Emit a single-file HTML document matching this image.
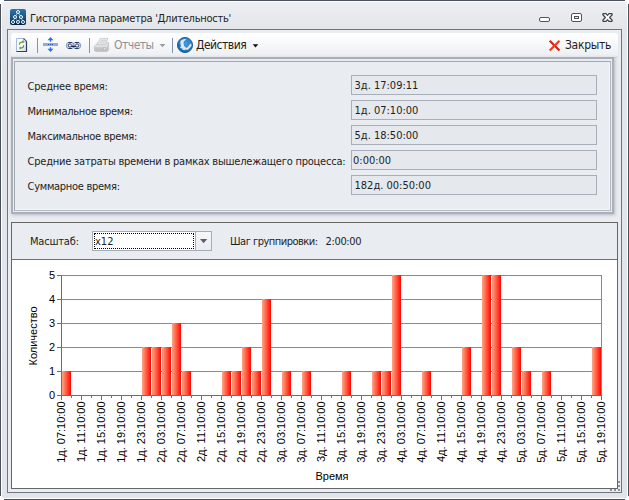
<!DOCTYPE html>
<html lang="ru"><head><meta charset="utf-8"><title>Гистограмма параметра 'Длительность'</title>
<style>
html,body{margin:0;padding:0;width:629px;height:500px;overflow:hidden;background:#fff;}
body{font-family:"DejaVu Sans Condensed","Liberation Sans",sans-serif;font-size:11px;letter-spacing:-0.2px;color:#1e1e1e;position:relative;}
.abs{position:absolute;}
#win{left:1px;top:1px;width:625px;height:496px;border:1px solid #fff;border-radius:2px;background:linear-gradient(#edeff2 0px,#e2e5e9 28px,#e1e4e8 100%);}
.ob{background:#4b515b;}
#inner{left:7px;top:29px;width:613px;height:462px;border:1px solid #6f757e;background:#e9ecf0;}
#title{left:30px;top:12px;letter-spacing:-0.27px;line-height:14px;color:#1e1e1e;white-space:nowrap;}
#tb{left:11px;top:33px;width:607px;height:24px;border-radius:3px;background:linear-gradient(#ffffff,#fcfcfd 25%,#f3f5f7 62%,#eceef2);box-shadow:0 1px 1px rgba(90,100,115,.25);}
.tbt{top:38px;line-height:14px;font-size:12px;letter-spacing:-0.5px;white-space:nowrap;}
.sep{width:1px;height:15px;top:38px;background:#8492ad;}
.lbl{left:27.5px;letter-spacing:-0.28px;white-space:nowrap;line-height:14px;}
.fld{left:351px;width:244px;height:18px;border:1px solid #a9afb9;background:#e5e8ec;line-height:20px;white-space:nowrap;letter-spacing:0;}
.fld span{padding-left:2.5px;}
#grp{left:11px;top:57px;width:599px;height:153px;border:2px solid #a9aeb8;background:#e9ecf0;box-shadow:1px 1px 3px rgba(120,130,145,.45);}
#grp2{left:14px;top:61px;width:595px;height:148px;border:1px solid #a2a7b0;border-right-color:#b3b8c1;border-bottom-color:#b3b8c1;box-shadow:inset -1px -1px 0 #f4f6f8;}
#cp{left:11px;top:222px;width:605px;height:265px;border:1px solid #666;background:#fff;}
#cph{left:12px;top:223px;width:605px;height:36px;background:#e9ecf0;border-bottom:1px solid #6b7077;}
.ax{font-family:"Liberation Sans",sans-serif;font-size:11px;letter-spacing:0;fill:#000;}
</style></head><body>
<div class="abs ob" style="left:4px;top:0;width:621px;height:1px"></div><div class="abs ob" style="left:4px;top:499px;width:621px;height:1px"></div><div class="abs ob" style="left:0;top:4px;width:1px;height:492px"></div><div class="abs ob" style="left:628px;top:4px;width:1px;height:492px"></div>
<div id="win" class="abs"></div>
<div id="inner" class="abs"></div>
<div id="title" class="abs">Гистограмма параметра 'Длительность'</div>
<div id="tb" class="abs"></div>
<div class="abs sep" style="left:37px"></div>
<div class="abs sep" style="left:89px"></div>
<div class="abs sep" style="left:172px"></div>
<div class="abs tbt" style="left:114px;color:#8d9199;">Отчеты</div>
<div class="abs tbt" style="left:196px;">Действия</div>
<div class="abs tbt" style="left:565px;letter-spacing:-0.3px">Закрыть</div>

<!-- title icon -->
<svg class="abs" style="left:10px;top:9px" width="16" height="16" viewBox="0 0 16 16"><defs><linearGradient id="ti" gradientUnits="userSpaceOnUse" x1="0" y1="0" x2="0" y2="16"><stop offset="0" stop-color="#2d74ad"/><stop offset="0.55" stop-color="#175281"/><stop offset="1" stop-color="#04213c"/></linearGradient></defs>
<rect x="0" y="0" width="16" height="16" rx="2" fill="url(#ti)"/>
<g stroke="#c4dcf2" stroke-width="0.7" fill="none"><path d="M8 3 L5 8 L3 13 M8 3 L11 8 L13 13"/><path d="M5.4 8 L7.6 13 M10.6 8 L8.4 13" stroke-opacity="0.55"/></g>
<g stroke="#f2f9ff" stroke-width="1" fill="url(#ti)"><circle cx="8" cy="3" r="1.5"/><circle cx="5" cy="8" r="1.5"/><circle cx="11" cy="8" r="1.5"/><circle cx="3" cy="13" r="1.5"/><circle cx="8" cy="13" r="1.5"/><circle cx="13" cy="13" r="1.5"/></g></svg>
<!-- window buttons -->
<svg class="abs" style="left:536px;top:10px" width="82" height="16" viewBox="536 10 82 16">
<rect x="539.5" y="17.5" width="10" height="4" rx="1.5" fill="#fff" stroke="#4f545c"/>
<rect x="571.5" y="13.5" width="10" height="8" rx="1.5" fill="#fff" stroke="#4f545c"/>
<rect x="574.5" y="16.5" width="4" height="2" fill="#e8ebef" stroke="#4f545c"/>
<path d="M603.4 13.6 L606 13.6 L607.5 15.4 L609 13.6 L611.6 13.6 Q612.6 14.2 612 15 L609.6 17.5 L612 20 Q612.6 20.8 611.6 21.4 L609 21.4 L607.5 19.6 L606 21.4 L603.4 21.4 Q602.4 20.8 603 20 L605.4 17.5 L603 15 Q602.4 14.2 603.4 13.6 Z" fill="#fff" stroke="#3c4149" stroke-width="1.2" stroke-linejoin="round"/>
</svg>
<!-- toolbar icons -->
<svg class="abs" style="left:14px;top:36px" width="182" height="18" viewBox="14 36 182 18">
<defs>
<linearGradient id="doc" x1="0" y1="0" x2="1" y2="1"><stop offset="0" stop-color="#ffffff"/><stop offset="0.6" stop-color="#f4f7fb"/><stop offset="1" stop-color="#c9d4e6"/></linearGradient>
<radialGradient id="glb" cx="0.55" cy="0.4" r="0.65"><stop offset="0" stop-color="#4a98d6"/><stop offset="0.6" stop-color="#2380c4"/><stop offset="1" stop-color="#14568e"/></radialGradient>
<linearGradient id="prt" x1="0" y1="0" x2="0" y2="1"><stop offset="0" stop-color="#d9dadb"/><stop offset="1" stop-color="#b9babc"/></linearGradient>
</defs>
<!-- refresh doc -->
<path d="M16.5 38.5 L23.5 38.5 L26.5 41.5 L26.5 51.5 L16.5 51.5 Z" fill="url(#doc)" stroke="#a9bbdc"/>
<path d="M23.5 38.5 L26.5 41.5 L26.5 51.5 L16.5 51.5" fill="none" stroke="#2c4263" stroke-width="1.2"/>
<path d="M23.3 38.8 L23.3 41.8 L26.3 41.8" fill="#dfe7f3" stroke="#7d8fb0" stroke-width="0.6"/>
<g fill="none" stroke="#5f951a" stroke-width="1.15"><path d="M19.4 44.8 C19.2 42.6 20.8 41.8 22.8 42"/><path d="M23.6 45.2 C23.8 47.4 22.2 48.2 20.2 48"/></g>
<path d="M22.3 40.6 L24.2 42 L22.3 43.5 Z" fill="#5f951a"/><path d="M20.7 46.5 L18.8 48 L20.7 49.4 Z" fill="#5f951a"/>
<!-- splitter -->
<rect x="43" y="43" width="15" height="3" fill="#98abcf"/>
<rect x="48" y="44" width="1" height="1" fill="#2f55a8"/><rect x="50" y="44" width="1" height="1" fill="#2f55a8"/><rect x="52" y="44" width="1" height="1" fill="#2f55a8"/>
<path d="M50.5 37 L53.5 40.2 L51.2 40.2 L51.2 41.8 L49.8 41.8 L49.8 40.2 L47.5 40.2 Z" fill="#2d6ff2"/>
<path d="M50.5 52 L53.5 48.8 L51.2 48.8 L51.2 47.2 L49.8 47.2 L49.8 48.8 L47.5 48.8 Z" fill="#2d6ff2"/>
<!-- link -->
<g fill="#d6e0f2" stroke="#7189b8" stroke-width="0.9"><rect x="66.4" y="42.4" width="7.6" height="6.2" rx="2.8"/><rect x="73" y="42.4" width="7.6" height="6.2" rx="2.8"/></g>
<g fill="#2a3b63"><rect x="68.3" y="42" width="3.6" height="1"/><rect x="75.1" y="42" width="3.6" height="1"/><rect x="68.3" y="48" width="3.6" height="1"/><rect x="75.1" y="48" width="3.6" height="1"/></g>
<g fill="#fdfeff" stroke="#1d2d55" stroke-width="1"><rect x="68.3" y="44" width="3.4" height="3" rx="1.4"/><rect x="75.3" y="44" width="3.4" height="3" rx="1.4"/></g>
<rect x="70.8" y="44.8" width="5.4" height="2.2" rx="1" fill="#1d2d55"/><rect x="71" y="44.4" width="5" height="1" rx="0.4" fill="#dbe5f5"/>
<!-- printer (disabled) -->
<path d="M94.4 46.2 L97.6 43 L108.6 42.6 L108.6 50 L107 51.6 L95.6 51.6 L94.4 50.4 Z" fill="url(#prt)" stroke="#c2c3c5" stroke-width="0.8"/>
<path d="M94.6 46.2 L97.8 43.2 L108.4 42.8 L106.8 46.2 Z" fill="#dedfe0"/>
<path d="M100.4 38.4 L108 38.4 L105.4 44.4 L97 44.4 Z" fill="#e9e9ea" stroke="#c6c7c9" stroke-width="0.8"/>
<path d="M101 40.4 L106 40.4 M99.8 42.2 L104.8 42.2" stroke="#cbccce" stroke-width="0.8" fill="none"/>
<rect x="94.8" y="46.2" width="12.4" height="0.9" fill="#e3e4e5"/>
<rect x="103.4" y="47.8" width="2.2" height="2" fill="#ededee" stroke="#a9aaad" stroke-width="0.5"/>
<!-- dropdown arrows -->
<path d="M159.5 44 L165.5 44 L162.5 47.2 Z" fill="#9a9ea5"/>
<!-- globe -->
<circle cx="185" cy="45" r="7.6" fill="url(#glb)" stroke="#1d5b93" stroke-width="0.9"/>
<path d="M180.4 43.6 L180.4 41 Q182 39.3 184.4 38.9 L186.6 39.3 Q184.6 40.4 183.8 41.6 L183.6 43.6 Q183.6 45.6 185 47 Q186.2 47.9 187.4 47.6 L190.5 43.6 L191.5 44.4 Q191.6 45.4 191 46.4 L188.2 49.4 Q186.6 50 185.2 49.4 L184.4 50.2 L182.2 49.6 L182.6 48.4 Q181.4 48.6 180.2 48 Q179.8 46.8 181.2 45.9 Q180.4 44.8 180.4 43.6 Z" fill="#dde8f2"/>
</svg>
<svg class="abs" style="left:250px;top:40px" width="12" height="10" viewBox="250 40 12 10"><path d="M252.7 44.3 L258.3 44.3 L255.5 47.5 Z" fill="#111"/></svg>
<svg class="abs" style="left:546px;top:38px" width="16" height="15" viewBox="546 38 16 15"><g stroke-linecap="butt" fill="none"><path d="M549.7 40.7 L559.5 50.5" stroke="#d42315" stroke-width="2.2"/><path d="M559.5 40.7 L549.7 50.5" stroke="#ef3b22" stroke-width="2.2"/></g></svg>
<div id="grp" class="abs"></div>
<div id="grp2" class="abs"></div>
<div class="abs lbl" style="top:80px;letter-spacing:-0.2px">Среднее время:</div>
<div class="abs lbl" style="top:105px">Минимальное время:</div>
<div class="abs lbl" style="top:130px">Максимальное время:</div>
<div class="abs lbl" style="top:155px;letter-spacing:-0.22px">Средние затраты времени в рамках вышележащего процесса:</div>
<div class="abs lbl" style="top:180px">Суммарное время:</div>
<div class="abs fld" style="top:75px"><span>3д. 17:09:11</span></div>
<div class="abs fld" style="top:100px"><span>1д. 07:10:00</span></div>
<div class="abs fld" style="top:125px"><span>5д. 18:50:00</span></div>
<div class="abs fld" style="top:150px"><span style="padding-left:1px">0:00:00</span></div>
<div class="abs fld" style="top:175px"><span>182д. 00:50:00</span></div>
<div id="cp" class="abs"></div>
<div id="cph" class="abs"></div>
<div class="abs" style="left:30px;top:235px;line-height:14px;">Масштаб:</div>
<div class="abs" style="left:92px;top:231px;width:118px;height:18px;border:1px solid #a6adb9;background:#fff;"></div>
<div class="abs" style="left:195px;top:232px;width:15px;height:18px;border-left:1px solid #a6adb9;background:linear-gradient(#f6f7fa,#e9ecf0);"></div>
<svg class="abs" style="left:198px;top:236px" width="12" height="10" viewBox="198 236 12 10"><path d="M200 239 L207.2 239 L203.6 243.2 Z" fill="#5a606b"/></svg>
<div class="abs" style="left:94px;top:233px;width:100px;height:16px;border:1px dotted #000;box-sizing:border-box;"></div>
<div class="abs" style="left:95px;top:235px;line-height:14px;letter-spacing:0;">x12</div>
<div class="abs" style="left:230px;top:235px;line-height:14px;white-space:nowrap;letter-spacing:-0.5px">Шаг группировки:</div>
<div class="abs" style="left:325.5px;top:235px;line-height:14px;white-space:nowrap;letter-spacing:-0.35px">2:00:00</div>
<div class="abs" style="left:618px;top:481px;width:2px;height:2px;background:#8b9199"></div><div class="abs" style="left:618px;top:485px;width:2px;height:2px;background:#8b9199"></div><div class="abs" style="left:618px;top:489px;width:2px;height:2px;background:#8b9199"></div><div class="abs" style="left:614px;top:489px;width:2px;height:2px;background:#8b9199"></div><div class="abs" style="left:610px;top:489px;width:2px;height:2px;background:#8b9199"></div>
<svg id="chart" width="605" height="237" viewBox="12 247 605 237" style="position:absolute;left:12px;top:247px">
<defs><linearGradient id="bg" x1="0" x2="1" y1="0" y2="0"><stop offset="0" stop-color="#ffa686"/><stop offset="0.5" stop-color="#ff5940"/><stop offset="1" stop-color="#ff0500"/></linearGradient></defs>
<rect x="62" y="371" width="540" height="1" fill="#8a8a8a"/>
<rect x="62" y="347" width="540" height="1" fill="#8a8a8a"/>
<rect x="62" y="323" width="540" height="1" fill="#8a8a8a"/>
<rect x="62" y="299" width="540" height="1" fill="#8a8a8a"/>
<rect x="62" y="275" width="540" height="1" fill="#8a8a8a"/>
<rect x="601" y="275" width="1" height="120" fill="#8a8a8a"/>
<rect x="62" y="371" width="9" height="24" fill="url(#bg)"/>
<rect x="142" y="347" width="9" height="48" fill="url(#bg)"/>
<rect x="152" y="347" width="9" height="48" fill="url(#bg)"/>
<rect x="162" y="347" width="9" height="48" fill="url(#bg)"/>
<rect x="172" y="323" width="9" height="72" fill="url(#bg)"/>
<rect x="182" y="371" width="9" height="24" fill="url(#bg)"/>
<rect x="222" y="371" width="9" height="24" fill="url(#bg)"/>
<rect x="232" y="371" width="9" height="24" fill="url(#bg)"/>
<rect x="242" y="347" width="9" height="48" fill="url(#bg)"/>
<rect x="252" y="371" width="9" height="24" fill="url(#bg)"/>
<rect x="262" y="299" width="9" height="96" fill="url(#bg)"/>
<rect x="282" y="371" width="9" height="24" fill="url(#bg)"/>
<rect x="302" y="371" width="9" height="24" fill="url(#bg)"/>
<rect x="342" y="371" width="9" height="24" fill="url(#bg)"/>
<rect x="372" y="371" width="9" height="24" fill="url(#bg)"/>
<rect x="382" y="371" width="9" height="24" fill="url(#bg)"/>
<rect x="392" y="275" width="9" height="120" fill="url(#bg)"/>
<rect x="422" y="371" width="9" height="24" fill="url(#bg)"/>
<rect x="462" y="347" width="9" height="48" fill="url(#bg)"/>
<rect x="482" y="275" width="9" height="120" fill="url(#bg)"/>
<rect x="492" y="275" width="9" height="120" fill="url(#bg)"/>
<rect x="512" y="347" width="9" height="48" fill="url(#bg)"/>
<rect x="522" y="371" width="9" height="24" fill="url(#bg)"/>
<rect x="542" y="371" width="9" height="24" fill="url(#bg)"/>
<rect x="592" y="347" width="9" height="48" fill="url(#bg)"/>
<rect x="61" y="275" width="1" height="121" fill="#6e6e6e"/>
<rect x="61" y="395" width="541" height="1" fill="#6e6e6e"/>
<rect x="57" y="395" width="4" height="1" fill="#6e6e6e"/>
<text x="55" y="398.6" text-anchor="end" class="ax">0</text>
<rect x="57" y="371" width="4" height="1" fill="#6e6e6e"/>
<text x="55" y="374.6" text-anchor="end" class="ax">1</text>
<rect x="57" y="347" width="4" height="1" fill="#6e6e6e"/>
<text x="55" y="350.6" text-anchor="end" class="ax">2</text>
<rect x="57" y="323" width="4" height="1" fill="#6e6e6e"/>
<text x="55" y="326.6" text-anchor="end" class="ax">3</text>
<rect x="57" y="299" width="4" height="1" fill="#6e6e6e"/>
<text x="55" y="302.6" text-anchor="end" class="ax">4</text>
<rect x="57" y="275" width="4" height="1" fill="#6e6e6e"/>
<text x="55" y="278.6" text-anchor="end" class="ax">5</text>
<rect x="61" y="395" width="1" height="5" fill="#6e6e6e"/>
<rect x="71" y="395" width="1" height="3" fill="#6e6e6e"/>
<rect x="81" y="395" width="1" height="5" fill="#6e6e6e"/>
<rect x="91" y="395" width="1" height="3" fill="#6e6e6e"/>
<rect x="101" y="395" width="1" height="5" fill="#6e6e6e"/>
<rect x="111" y="395" width="1" height="3" fill="#6e6e6e"/>
<rect x="121" y="395" width="1" height="5" fill="#6e6e6e"/>
<rect x="131" y="395" width="1" height="3" fill="#6e6e6e"/>
<rect x="141" y="395" width="1" height="5" fill="#6e6e6e"/>
<rect x="151" y="395" width="1" height="3" fill="#6e6e6e"/>
<rect x="161" y="395" width="1" height="5" fill="#6e6e6e"/>
<rect x="171" y="395" width="1" height="3" fill="#6e6e6e"/>
<rect x="181" y="395" width="1" height="5" fill="#6e6e6e"/>
<rect x="191" y="395" width="1" height="3" fill="#6e6e6e"/>
<rect x="201" y="395" width="1" height="5" fill="#6e6e6e"/>
<rect x="211" y="395" width="1" height="3" fill="#6e6e6e"/>
<rect x="221" y="395" width="1" height="5" fill="#6e6e6e"/>
<rect x="231" y="395" width="1" height="3" fill="#6e6e6e"/>
<rect x="241" y="395" width="1" height="5" fill="#6e6e6e"/>
<rect x="251" y="395" width="1" height="3" fill="#6e6e6e"/>
<rect x="261" y="395" width="1" height="5" fill="#6e6e6e"/>
<rect x="271" y="395" width="1" height="3" fill="#6e6e6e"/>
<rect x="281" y="395" width="1" height="5" fill="#6e6e6e"/>
<rect x="291" y="395" width="1" height="3" fill="#6e6e6e"/>
<rect x="301" y="395" width="1" height="5" fill="#6e6e6e"/>
<rect x="311" y="395" width="1" height="3" fill="#6e6e6e"/>
<rect x="321" y="395" width="1" height="5" fill="#6e6e6e"/>
<rect x="331" y="395" width="1" height="3" fill="#6e6e6e"/>
<rect x="341" y="395" width="1" height="5" fill="#6e6e6e"/>
<rect x="351" y="395" width="1" height="3" fill="#6e6e6e"/>
<rect x="361" y="395" width="1" height="5" fill="#6e6e6e"/>
<rect x="371" y="395" width="1" height="3" fill="#6e6e6e"/>
<rect x="381" y="395" width="1" height="5" fill="#6e6e6e"/>
<rect x="391" y="395" width="1" height="3" fill="#6e6e6e"/>
<rect x="401" y="395" width="1" height="5" fill="#6e6e6e"/>
<rect x="411" y="395" width="1" height="3" fill="#6e6e6e"/>
<rect x="421" y="395" width="1" height="5" fill="#6e6e6e"/>
<rect x="431" y="395" width="1" height="3" fill="#6e6e6e"/>
<rect x="441" y="395" width="1" height="5" fill="#6e6e6e"/>
<rect x="451" y="395" width="1" height="3" fill="#6e6e6e"/>
<rect x="461" y="395" width="1" height="5" fill="#6e6e6e"/>
<rect x="471" y="395" width="1" height="3" fill="#6e6e6e"/>
<rect x="481" y="395" width="1" height="5" fill="#6e6e6e"/>
<rect x="491" y="395" width="1" height="3" fill="#6e6e6e"/>
<rect x="501" y="395" width="1" height="5" fill="#6e6e6e"/>
<rect x="511" y="395" width="1" height="3" fill="#6e6e6e"/>
<rect x="521" y="395" width="1" height="5" fill="#6e6e6e"/>
<rect x="531" y="395" width="1" height="3" fill="#6e6e6e"/>
<rect x="541" y="395" width="1" height="5" fill="#6e6e6e"/>
<rect x="551" y="395" width="1" height="3" fill="#6e6e6e"/>
<rect x="561" y="395" width="1" height="5" fill="#6e6e6e"/>
<rect x="571" y="395" width="1" height="3" fill="#6e6e6e"/>
<rect x="581" y="395" width="1" height="5" fill="#6e6e6e"/>
<rect x="591" y="395" width="1" height="3" fill="#6e6e6e"/>
<rect x="601" y="395" width="1" height="5" fill="#6e6e6e"/>
<text transform="translate(65.3,401.4) rotate(-90)" text-anchor="end" class="ax" letter-spacing="-0.2">1д. 07:10:00</text>
<text transform="translate(85.3,401.4) rotate(-90)" text-anchor="end" class="ax" letter-spacing="-0.2">1д. 11:10:00</text>
<text transform="translate(105.3,401.4) rotate(-90)" text-anchor="end" class="ax" letter-spacing="-0.2">1д. 15:10:00</text>
<text transform="translate(125.3,401.4) rotate(-90)" text-anchor="end" class="ax" letter-spacing="-0.2">1д. 19:10:00</text>
<text transform="translate(145.3,401.4) rotate(-90)" text-anchor="end" class="ax" letter-spacing="-0.2">1д. 23:10:00</text>
<text transform="translate(165.3,401.4) rotate(-90)" text-anchor="end" class="ax" letter-spacing="-0.2">2д. 03:10:00</text>
<text transform="translate(185.3,401.4) rotate(-90)" text-anchor="end" class="ax" letter-spacing="-0.2">2д. 07:10:00</text>
<text transform="translate(205.3,401.4) rotate(-90)" text-anchor="end" class="ax" letter-spacing="-0.2">2д. 11:10:00</text>
<text transform="translate(225.3,401.4) rotate(-90)" text-anchor="end" class="ax" letter-spacing="-0.2">2д. 15:10:00</text>
<text transform="translate(245.3,401.4) rotate(-90)" text-anchor="end" class="ax" letter-spacing="-0.2">2д. 19:10:00</text>
<text transform="translate(265.3,401.4) rotate(-90)" text-anchor="end" class="ax" letter-spacing="-0.2">2д. 23:10:00</text>
<text transform="translate(285.3,401.4) rotate(-90)" text-anchor="end" class="ax" letter-spacing="-0.2">3д. 03:10:00</text>
<text transform="translate(305.3,401.4) rotate(-90)" text-anchor="end" class="ax" letter-spacing="-0.2">3д. 07:10:00</text>
<text transform="translate(325.3,401.4) rotate(-90)" text-anchor="end" class="ax" letter-spacing="-0.2">3д. 11:10:00</text>
<text transform="translate(345.3,401.4) rotate(-90)" text-anchor="end" class="ax" letter-spacing="-0.2">3д. 15:10:00</text>
<text transform="translate(365.3,401.4) rotate(-90)" text-anchor="end" class="ax" letter-spacing="-0.2">3д. 19:10:00</text>
<text transform="translate(385.3,401.4) rotate(-90)" text-anchor="end" class="ax" letter-spacing="-0.2">3д. 23:10:00</text>
<text transform="translate(405.3,401.4) rotate(-90)" text-anchor="end" class="ax" letter-spacing="-0.2">4д. 03:10:00</text>
<text transform="translate(425.3,401.4) rotate(-90)" text-anchor="end" class="ax" letter-spacing="-0.2">4д. 07:10:00</text>
<text transform="translate(445.3,401.4) rotate(-90)" text-anchor="end" class="ax" letter-spacing="-0.2">4д. 11:10:00</text>
<text transform="translate(465.3,401.4) rotate(-90)" text-anchor="end" class="ax" letter-spacing="-0.2">4д. 15:10:00</text>
<text transform="translate(485.3,401.4) rotate(-90)" text-anchor="end" class="ax" letter-spacing="-0.2">4д. 19:10:00</text>
<text transform="translate(505.3,401.4) rotate(-90)" text-anchor="end" class="ax" letter-spacing="-0.2">4д. 23:10:00</text>
<text transform="translate(525.3,401.4) rotate(-90)" text-anchor="end" class="ax" letter-spacing="-0.2">5д. 03:10:00</text>
<text transform="translate(545.3,401.4) rotate(-90)" text-anchor="end" class="ax" letter-spacing="-0.2">5д. 07:10:00</text>
<text transform="translate(565.3,401.4) rotate(-90)" text-anchor="end" class="ax" letter-spacing="-0.2">5д. 11:10:00</text>
<text transform="translate(585.3,401.4) rotate(-90)" text-anchor="end" class="ax" letter-spacing="-0.2">5д. 15:10:00</text>
<text transform="translate(605.3,401.4) rotate(-90)" text-anchor="end" class="ax" letter-spacing="-0.2">5д. 19:10:00</text>
<text transform="translate(37,336) rotate(-90)" text-anchor="middle" class="ax">Количество</text>
<text x="332" y="480" text-anchor="middle" class="ax">Время</text>
</svg>
</body></html>
